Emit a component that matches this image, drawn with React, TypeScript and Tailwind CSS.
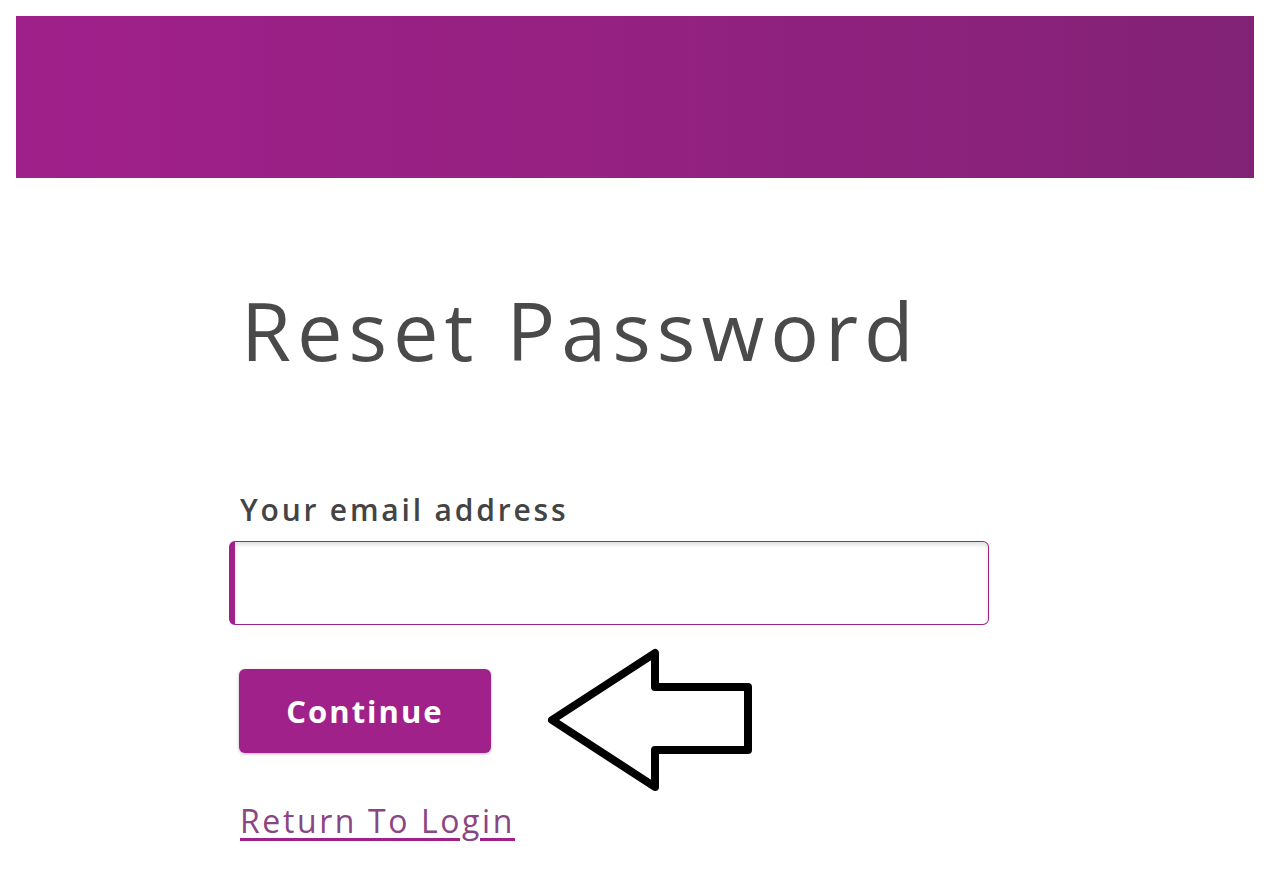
export default function App() {
  return (
    <div className="min-h-screen bg-white pl-4 pr-[26px] pt-4 font-['Open_Sans',sans-serif]">
      <div className="h-[162px] w-full bg-gradient-to-r from-[#a01f8a] via-[#942181] to-[#822276]" />

      <div className="flex flex-col pl-[213px] pt-[111px]">
        <h1 className="pl-[12px] text-[81px] font-normal leading-none tracking-[6px] text-[#4a4a4a]">
          Reset Password
        </h1>

        <label className="mt-[125px] pl-[11px] text-[30px] font-semibold leading-none tracking-[2.8px] text-[#444444]">
          Your email address
        </label>
        <input
          type="email"
          className="mt-[16px] h-[84px] w-[760px] rounded-md border border-l-[6px] border-[#a0218a] bg-white px-4 shadow-[inset_0_3px_4px_rgba(0,0,0,0.12)] outline-none"
        />

        <div className="relative mt-[44px] flex pl-[10px]">
          <button className="h-[84px] w-[252px] rounded-md bg-[#a0218a] text-[31px] font-bold tracking-[2px] text-white shadow-[0_1px_3px_rgba(0,0,0,0.3)]">
            Continue
          </button>
          <svg width="230" height="160" viewBox="0 0 230 160" className="absolute left-[309px] top-[-28px]" fill="none">
            <path
              d="M14 79 L117 12 L117 46 L210 46 L210 109 L117 109 L117 146 Z"
              stroke="#000"
              strokeWidth="8"
              strokeLinejoin="round"
            />
          </svg>
        </div>

        <a href="#" className="mt-[52px] self-start ml-[11px] text-[32px] leading-none tracking-[2.6px] text-[#8a4584] underline decoration-[#a0218a] decoration-[3px] underline-offset-[5px]">
          Return To Login
        </a>
      </div>
    </div>
  )
}
